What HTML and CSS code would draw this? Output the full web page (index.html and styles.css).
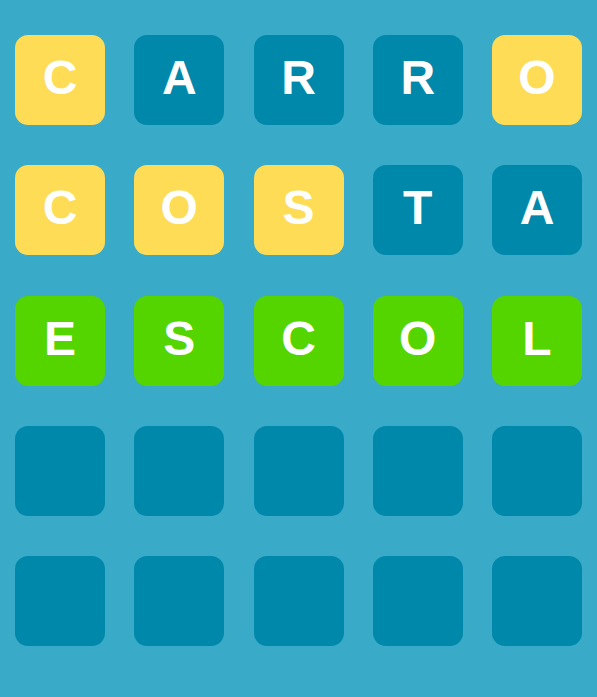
FILE: index.html
```html
<!DOCTYPE html>
<html lang="pt">
<head>
<meta charset="utf-8">
<title>Palavras</title>
<link rel="stylesheet" href="styles.css">
</head>
<body>
<main class="board">
  <div class="tile present">C</div>
  <div class="tile absent">A</div>
  <div class="tile absent">R</div>
  <div class="tile absent">R</div>
  <div class="tile present">O</div>

  <div class="tile present">C</div>
  <div class="tile present">O</div>
  <div class="tile present">S</div>
  <div class="tile absent">T</div>
  <div class="tile absent">A</div>

  <div class="tile correct">E</div>
  <div class="tile correct">S</div>
  <div class="tile correct">C</div>
  <div class="tile correct">O</div>
  <div class="tile correct">L</div>

  <div class="tile empty"></div>
  <div class="tile empty"></div>
  <div class="tile empty"></div>
  <div class="tile empty"></div>
  <div class="tile empty"></div>

  <div class="tile empty"></div>
  <div class="tile empty"></div>
  <div class="tile empty"></div>
  <div class="tile empty"></div>
  <div class="tile empty"></div>
</main>
</body>
</html>
```
FILE: styles.css
```css
html, body {
  margin: 0;
  padding: 0;
  background: #39aac8;
  height: 100%;
}
body {
  font-family: "Liberation Sans", Arial, sans-serif;
}
.board {
  display: grid;
  grid-template-columns: repeat(5, 90px);
  grid-auto-rows: 90px;
  column-gap: 29.25px;
  row-gap: 40.25px;
  padding: 35px 15px 0 15px;
}
.tile {
  border-radius: 13px;
  display: flex;
  align-items: center;
  justify-content: center;
  color: #ffffff;
  font-weight: bold;
  font-size: 48px;
  line-height: 1;
  padding-bottom: 4px;
  box-sizing: border-box;
}
.absent, .empty { background: #0088ab; }
.present { background: #ffdc56; }
.correct { background: #55d500; }
```
